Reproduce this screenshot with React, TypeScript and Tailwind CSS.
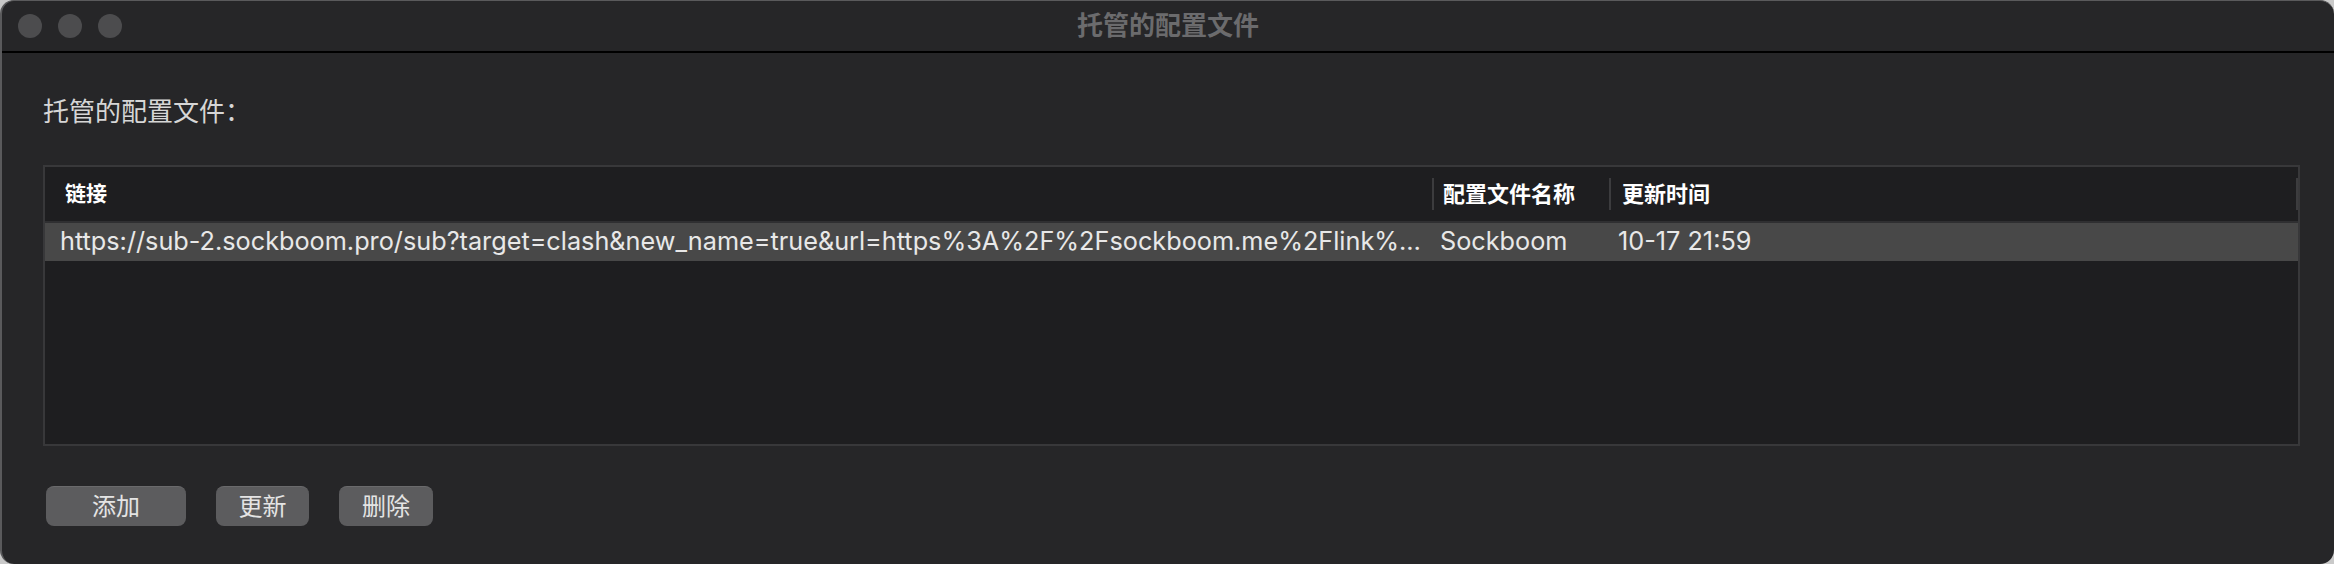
import React from 'react';

const sans = { fontFamily: '"Liberation Sans", "Noto Sans CJK SC", sans-serif' };
const rowFont = { fontFamily: 'Inter, "Liberation Sans", "Noto Sans CJK SC", sans-serif' };

interface Profile {
  url: string;
  name: string;
  updated: string;
}

const profiles: Profile[] = [
  {
    url: 'https://sub-2.sockboom.pro/sub?target=clash&new_name=true&url=https%3A%2F%2Fsockboom.me%2Flink%2Fa8Xk2PqLw0n%3Fclash%3D1&insert=false&config=default',
    name: 'Sockboom',
    updated: '10-17 21:59',
  },
];

function Btn({ label, w }: { label: string; w: string }) {
  return (
    <button
      className={`${w} h-[40px] rounded-[8px] bg-[#5c5c5e] border-t border-[#6a6a6c] text-[24px] leading-none text-[#e4e4e4] flex items-center justify-center`}
    >
      {label}
    </button>
  );
}

export default function App() {
  return (
    <div className="w-[2334px] h-[564px] bg-[#c9c9c9]" style={sans}>
      <div className="w-full h-full rounded-[14px] bg-[#262628] border-l-2 border-t border-[#5a5a5c] overflow-hidden flex flex-col">
        {/* title bar */}
        <div className="h-[52px] shrink-0 border-b-2 border-black flex items-center relative">
          <div className="flex gap-[16px] pl-[16px]">
            <span className="w-[24px] h-[24px] rounded-full bg-[#4c4c4e]" />
            <span className="w-[24px] h-[24px] rounded-full bg-[#4c4c4e]" />
            <span className="w-[24px] h-[24px] rounded-full bg-[#4c4c4e]" />
          </div>
          <div className="absolute inset-0 flex items-center justify-center text-[26px] font-bold text-[#6b6b6d]">
            托管的配置文件
          </div>
        </div>

        <div className="flex-1 pl-[41px] pr-[34px] flex flex-col">
          <div className="h-[40px] mt-[44px] text-[26px] leading-none text-[#d6d6d6] pt-[2px]">托管的配置文件：</div>

          {/* table */}
          <div className="mt-[28px] h-[281px] border-2 border-[#38383a] bg-[#1e1e20] flex flex-col">
            <div className="h-[56px] flex items-center border-b-2 border-[#2f2f31] text-white font-bold text-[21px]">
              <div className="w-[1387px] pl-[20px]">链接</div>
              <div className="w-[2px] h-[32px] bg-[#3c3c3e]" />
              <div className="w-[175px] pl-[9px] text-[22px]">配置文件名称</div>
              <div className="w-[2px] h-[32px] bg-[#3c3c3e]" />
              <div className="flex-1 pl-[11px] text-[22px]">更新时间</div>
              <div className="w-[2px] h-[32px] bg-[#3c3c3e]" />
            </div>
            {profiles.map((p) => (
              <div key={p.name} className="h-[38px] bg-[#484848] flex items-center text-[25.25px] text-[#e8e8e8]" style={rowFont}>
                <div className="w-[1389px] pl-[15px] pr-[3px] truncate">{p.url}</div>
                <div className="w-[177px] pl-[6px] truncate">{p.name}</div>
                <div className="flex-1 pl-[7px]">{p.updated}</div>
              </div>
            ))}
          </div>

          <div className="mt-[40px] flex gap-[30px] pl-[3px]">
            <Btn label="添加" w="w-[140px]" />
            <Btn label="更新" w="w-[93px]" />
            <Btn label="删除" w="w-[94px]" />
          </div>
        </div>
      </div>
    </div>
  );
}
